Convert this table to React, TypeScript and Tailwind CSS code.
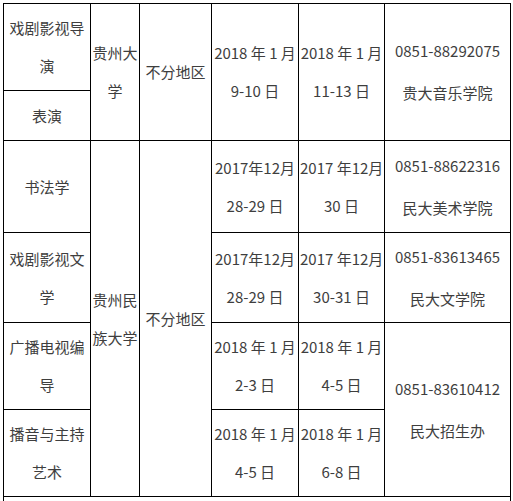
const cell =
  "border border-black text-center align-middle px-[1px] py-0 text-[15px] leading-[38px] text-[#3e3e3e]";
const dateCell = cell + " whitespace-nowrap";
const contactCell =
  "border border-black text-center align-middle px-[1px] py-0 text-[15px] leading-[42px] text-[#3e3e3e] whitespace-nowrap";

function Contact({ phone, dept }: { phone: string; dept: string }) {
  return (
    <>
      <div>{phone}</div>
      <div>{dept}</div>
    </>
  );
}

function Dates({ a, b }: { a: string; b: string }) {
  return (
    <>
      <div>{a}</div>
      <div>{b}</div>
    </>
  );
}

export default function App() {
  return (
    <div className="h-[501px] overflow-hidden bg-white font-['Noto_Sans_CJK_SC','Noto_Sans',sans-serif]">
      <table className="ml-[3px] mt-[3px] w-[507px] table-fixed border-collapse">
        <colgroup>
          <col className="w-[87px]" />
          <col className="w-[49px]" />
          <col className="w-[72px]" />
          <col className="w-[87px]" />
          <col className="w-[86px]" />
          <col className="w-[126px]" />
        </colgroup>
        <tbody>
          <tr className="h-[87px]">
            <td className={cell}>戏剧影视导演</td>
            <td className={cell} rowSpan={2}>
              贵州大学
            </td>
            <td className={cell} rowSpan={2}>
              不分地区
            </td>
            <td className={dateCell} rowSpan={2}>
              <Dates a="2018 年 1 月" b="9-10 日" />
            </td>
            <td className={dateCell} rowSpan={2}>
              <Dates a="2018 年 1 月" b="11-13 日" />
            </td>
            <td className={contactCell} rowSpan={2}>
              <Contact phone="0851-88292075" dept="贵大音乐学院" />
            </td>
          </tr>
          <tr className="h-[50px]">
            <td className={cell}>表演</td>
          </tr>
          <tr className="h-[92px]">
            <td className={cell}>书法学</td>
            <td className={cell} rowSpan={4}>
              贵州民族大学
            </td>
            <td className={cell} rowSpan={4}>
              不分地区
            </td>
            <td className={dateCell}>
              <Dates a="2017年12月" b="28-29 日" />
            </td>
            <td className={dateCell}>
              <Dates a="2017 年12月" b="30 日" />
            </td>
            <td className={contactCell}>
              <Contact phone="0851-88622316" dept="民大美术学院" />
            </td>
          </tr>
          <tr className="h-[90px]">
            <td className={cell}>戏剧影视文学</td>
            <td className={dateCell}>
              <Dates a="2017年12月" b="28-29 日" />
            </td>
            <td className={dateCell}>
              <Dates a="2017 年12月" b="30-31 日" />
            </td>
            <td className={contactCell}>
              <Contact phone="0851-83613465" dept="民大文学院" />
            </td>
          </tr>
          <tr className="h-[87px]">
            <td className={cell}>广播电视编导</td>
            <td className={dateCell}>
              <Dates a="2018 年 1 月" b="2-3 日" />
            </td>
            <td className={dateCell}>
              <Dates a="2018 年 1 月" b="4-5 日" />
            </td>
            <td className={contactCell} rowSpan={2}>
              <Contact phone="0851-83610412" dept="民大招生办" />
            </td>
          </tr>
          <tr className="h-[87px]">
            <td className={cell}>播音与主持艺术</td>
            <td className={dateCell}>
              <Dates a="2018 年 1 月" b="4-5 日" />
            </td>
            <td className={dateCell}>
              <Dates a="2018 年 1 月" b="6-8 日" />
            </td>
          </tr>
          <tr className="h-[40px]">
            <td className={cell} colSpan={6}></td>
          </tr>
        </tbody>
      </table>
    </div>
  );
}
